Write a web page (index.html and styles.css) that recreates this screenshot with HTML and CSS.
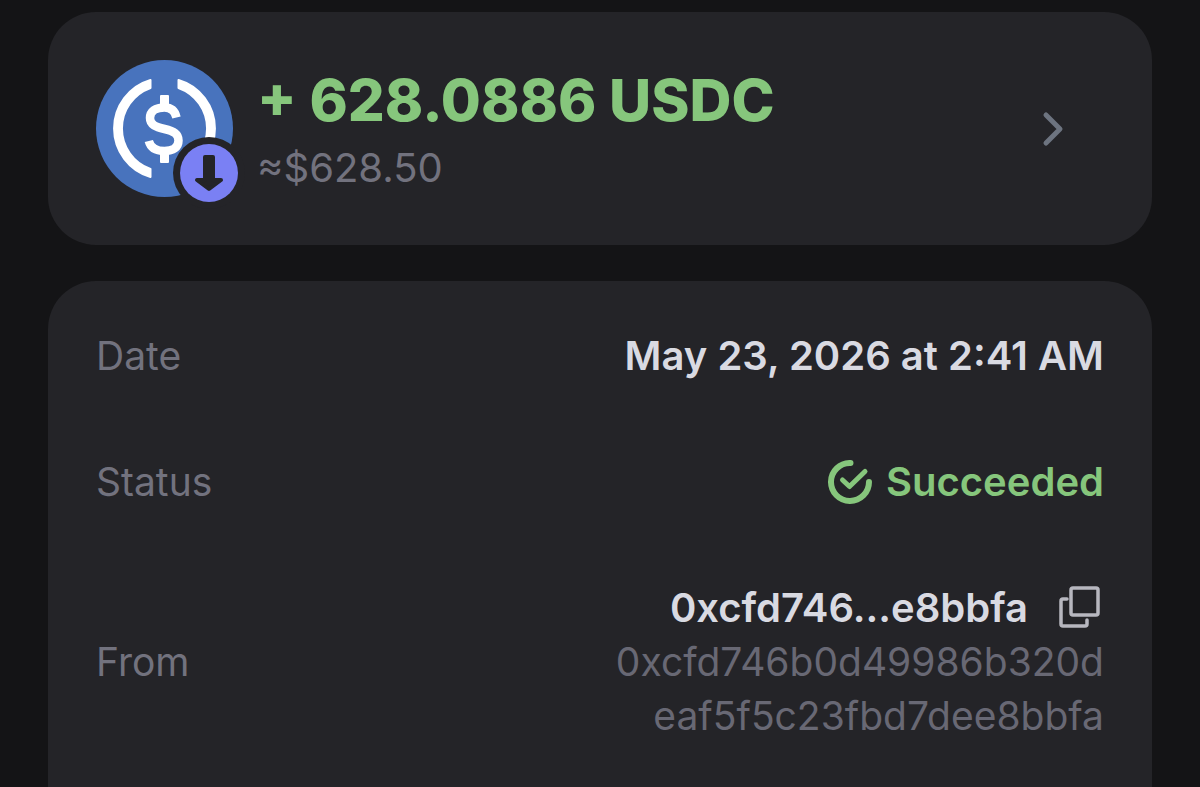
FILE: index.html
```
<!DOCTYPE html>
<html lang="en">
<head>
  <meta charset="UTF-8">
  <meta name="viewport" content="width=device-width, initial-scale=1.0">
  <title>Transaction Details</title>
  <link rel="stylesheet" href="styles.css">
</head>
<body>
  <a class="card asset" href="#usdc">
    <!-- USDC coin with the "received" badge -->
    <svg class="coin" viewBox="0 0 137 137" aria-hidden="true">
      <circle cx="68.5" cy="68.5" r="68.5" fill="#4873bd"/>
      <g fill="#fff" stroke="#fff" stroke-width="2" stroke-linejoin="round">
        <path d="M54.5 20A50.5 50.5 0 0 0 54.5 117V109A43 43 0 0 1 54.5 28Z"/>
        <path d="M82.5 20A50.5 50.5 0 0 1 82.5 117V109A43 43 0 0 0 82.5 28Z"/>
        <rect x="65" y="36" width="7" height="10"/>
        <rect x="65" y="92" width="7" height="10"/>
      </g>
      <path d="M80.5 57.5C79 50.5 74.5 47.5 68.5 47.5C59.5 47.5 54 51.5 54 58C54 65 60 67 68.5 69C78 71.2 82.5 74 82.5 80.5C82.5 87.5 77 91 68.5 91C59.5 91 54.5 87.5 52.8 81" fill="none" stroke="#fff" stroke-width="8.5"/>
      <circle cx="113" cy="113" r="36" fill="#242428"/>
      <circle cx="113" cy="113" r="29" fill="#7a80f4"/>
      <path d="M109 97H117V120H125L113 129L101 120H109Z" fill="#242428" stroke="#242428" stroke-width="4" stroke-linejoin="round"/>
    </svg>
    <div class="amounts">
      <div class="amount">+ 628.0886 USDC</div>
      <div class="fiat">≈$628.50</div>
    </div>
    <svg class="chevron" viewBox="0 0 24 36" aria-hidden="true">
      <path d="M6 4L20 18L6 32" fill="none" stroke="#6d7480" stroke-width="5" stroke-linecap="round" stroke-linejoin="round"/>
    </svg>
  </a>

  <dl class="card details">
    <div class="row">
      <dt>Date</dt>
      <dd class="value">May 23, 2026 at 2:41 AM</dd>
    </div>
    <div class="row">
      <dt>Status</dt>
      <dd class="value success">
        <svg class="status-icon" viewBox="0 0 44 44" aria-hidden="true">
          <g fill="none" stroke="currentColor" stroke-width="6" stroke-linecap="round" stroke-linejoin="round">
            <path d="M22.5 3A19 19 0 1 0 41 22"/>
            <path d="M14.500 20L21.500 26.500L37 11.500" stroke-width="5"/>
          </g>
        </svg>
        Succeeded
      </dd>
    </div>
    <div class="row">
      <dt>From</dt>
      <dd>
        <div class="value address">
          0xcfd746...e8bbfa
          <button class="copy" type="button" aria-label="Copy address">
            <svg viewBox="0 0 48 48" aria-hidden="true">
              <g fill="none" stroke="#b7b7bf" stroke-width="3.5" stroke-linecap="round" stroke-linejoin="round">
                <rect x="15" y="4" width="27" height="27" rx="2"/>
                <path d="M11 15H7Q5 15 5 17V40Q5 42 7 42H29Q31 42 31 40V36"/>
              </g>
            </svg>
          </button>
        </div>
        <div class="full-address">0xcfd746b0d49986b320d<br>eaf5f5c23fbd7dee8bbfa</div>
      </dd>
    </div>
  </dl>
</body>
</html>
```
FILE: styles.css
```
* {
  box-sizing: border-box;
}

body {
  margin: 0;
  padding: 12px 48px 0;
  min-height: 100vh;
  display: flex;
  flex-direction: column;
  gap: 36px;
  background-color: #141416;
  color: #d9dae2;
  font-family: Inter, "Liberation Sans", sans-serif;
  font-size: 40px;
  line-height: 54px;
}

.card {
  background-color: #242428;
  border-radius: 48px;
  padding: 48px;
}

.asset {
  display: flex;
  align-items: center;
  gap: 24px;
  color: inherit;
  text-decoration: none;
}

.coin {
  width: 137px;
  height: 137px;
  flex: none;
  overflow: visible;
}

.amounts {
  flex: 1;
}

.amount {
  color: #86c67c;
  font-size: 58px;
  font-weight: 800;
  line-height: 78px;
}

.fiat {
  color: #72727e;
  line-height: 58px;
}

.chevron {
  width: 24px;
  height: 36px;
  margin-right: 40px;
}

.details {
  flex: 1;
  display: flex;
  flex-direction: column;
  gap: 72px;
  margin: 0;
  padding-bottom: 36px;
  border-radius: 48px 48px 0 0;
}

.row {
  display: flex;
  justify-content: space-between;
  align-items: center;
}

dt {
  color: #72727e;
  font-size: 39px;
}

dd {
  margin: 0;
  text-align: right;
}

.value {
  font-weight: 600;
}

.success {
  display: flex;
  align-items: center;
  gap: 14px;
  color: #86c67c;
}

.status-icon {
  width: 44px;
  height: 44px;
}

.address {
  display: flex;
  align-items: center;
  justify-content: flex-end;
  gap: 28px;
}

.copy {
  width: 48px;
  height: 48px;
  padding: 0;
  border: none;
  background: none;
  cursor: pointer;
}

.copy svg {
  display: block;
}

.full-address {
  color: #686874;
  font-size: 39px;
}
```
